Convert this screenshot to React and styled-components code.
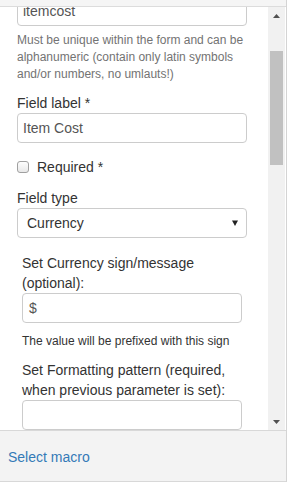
import React from "react";
import styled, { createGlobalStyle } from "styled-components";

const Global = createGlobalStyle`
  html, body { margin: 0; padding: 0; background: #fff; }
  body { font-family: "Liberation Sans", Arial, sans-serif; font-size: 14px; color: #333; }
  * { box-sizing: border-box; }
`;

const Panel = styled.div`
  width: 287px;
  height: 482px;
  display: flex;
  flex-direction: column;
  border-right: 1px solid #d4d4d4;
  background: #fff;
`;

const TopStrip = styled.div`
  height: 7px;
  flex: none;
  background: #f5f5f5;
  border-bottom: 1px solid #dcdcdc;
`;

const Body = styled.div`
  height: 423px;
  flex: none;
  display: flex;
`;

const Viewport = styled.div`
  width: 268px;
  flex: none;
  overflow: hidden;
`;

const Content = styled.div`
  margin-top: -11px;
  padding: 0 21px 0 17px;
`;

const Input = styled.div`
  height: 30px;
  width: 100%;
  border: 1px solid #ccc;
  border-radius: 4px;
  background: #fff;
  color: #555;
  font-size: 14px;
  line-height: 28px;
  padding-left: ${(p) => p.$pad || 5}px;
  white-space: nowrap;
`;

const Help = styled.div`
  margin: 6px 0 10px;
  font-size: 12px;
  line-height: 17px;
  color: #737373;
`;

const Note = styled.div`
  margin: 10px 0 10px;
  font-size: 12px;
  line-height: 17px;
  color: #333;
  white-space: nowrap;
`;

const Label = styled.div`
  font-size: 14px;
  line-height: 20px;
  color: #333;
`;

const CheckRow = styled.div`
  display: flex;
  align-items: center;
  gap: 8px;
  height: 20px;
  margin: 14px 0 11px;
  font-size: 14px;
  color: #333;
`;

const Box = styled.span`
  width: 12px;
  height: 12px;
  border: 1px solid #a0a0a0;
  border-radius: 3px;
  background: linear-gradient(#fdfdfd, #e8e8e8);
`;

const Select = styled.div`
  height: 30px;
  border: 1px solid #ccc;
  border-radius: 4px;
  display: flex;
  align-items: center;
  justify-content: space-between;
  padding: 0 8px 0 9px;
  color: #333;
  font-size: 14px;
`;

const Nested = styled.div`
  padding: 15px 5px 0;
`;

const Scrollbar = styled.div`
  width: 17px;
  flex: none;
  background: #f1f1f1;
  display: flex;
  flex-direction: column;
  align-items: center;
`;

const Arrow = styled.div`
  height: 17px;
  width: 17px;
  display: flex;
  align-items: center;
  justify-content: center;
`;

const Thumb = styled.div`
  width: 13px;
  height: 114px;
  margin-top: 27px;
  background: #c1c1c1;
`;

const Spacer = styled.div`
  flex: 1;
`;

const Footer = styled.div`
  flex: none;
  height: 52px;
  border-top: 1px solid #d8d8d8;
  border-bottom: 1px solid #d8d8d8;
  background: #f3f3f3;
  display: flex;
  align-items: center;
  padding-left: 8px;
`;

const Link = styled.a`
  color: #337ab7;
  font-size: 14px;
  text-decoration: none;
  margin-top: 1px;
`;

export default function App() {
  return (
    <>
      <Global />
      <Panel>
        <TopStrip />
        <Body>
          <Viewport>
            <Content>
              <Input>itemcost</Input>
              <Help>
                Must be unique within the form and can be alphanumeric (contain only latin symbols and/or numbers, no umlauts!)
              </Help>
              <Label>Field label *</Label>
              <Input>Item Cost</Input>
              <CheckRow>
                <Box />
                Required *
              </CheckRow>
              <Label>Field type</Label>
              <Select>
                <span>Currency</span>
                <svg width="6" height="6" viewBox="0 0 6 6">
                  <path d="M0 0.5 H6 L3 6 Z" fill="#222" />
                </svg>
              </Select>
              <Nested>
                <Label>Set Currency sign/message (optional):</Label>
                <Input $pad={6}>$</Input>
                <Note>The value will be prefixed with this sign</Note>
                <Label>Set Formatting pattern (required, when previous parameter is set):</Label>
                <Input />
              </Nested>
            </Content>
          </Viewport>
          <Scrollbar>
            <Arrow>
              <svg width="7" height="4" viewBox="0 0 7 4">
                <path d="M0 4 H7 L3.5 0 Z" fill="#505050" />
              </svg>
            </Arrow>
            <Thumb />
            <Spacer />
            <Arrow>
              <svg width="7" height="4" viewBox="0 0 7 4">
                <path d="M0 0 H7 L3.5 4 Z" fill="#505050" />
              </svg>
            </Arrow>
          </Scrollbar>
        </Body>
        <Footer>
          <Link href="#">Select macro</Link>
        </Footer>
      </Panel>
    </>
  );
}
